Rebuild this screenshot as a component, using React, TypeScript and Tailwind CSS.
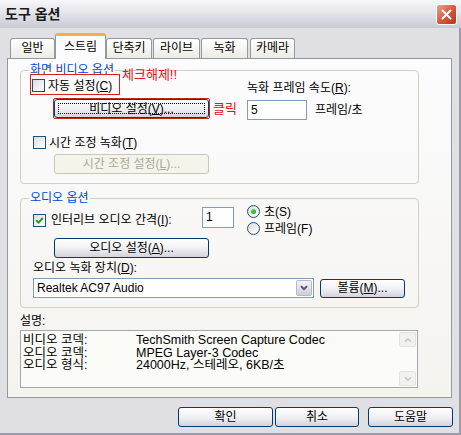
import React from "react";

const tabs = [
  { label: "일반", cls: "w-[45px]" },
  { label: "스트림", cls: "w-[51px]", active: true },
  { label: "단축키", cls: "w-[46px]" },
  { label: "라이브", cls: "w-[47px] ml-[1px]" },
  { label: "녹화", cls: "w-[47px] ml-[1px]" },
  { label: "카메라", cls: "w-[45px] ml-[2px]" },
];

const codecRows = [
  ["비디오 코덱:", "TechSmith Screen Capture Codec"],
  ["오디오 코덱:", "MPEG Layer-3 Codec"],
  ["오디오 형식:", "24000Hz, 스테레오, 6KB/초"],
];

function CheckBox({ checked = false }: { checked?: boolean }) {
  return (
    <span className="flex w-[13px] h-[13px] shrink-0 items-center justify-center border border-[#1C5180] bg-linear-to-br from-[#DCDCD7] to-white">
      {checked && (
        <svg width="9" height="9" viewBox="0 0 9 9">
          <path d="M1.2 4.2 L3.6 6.6 L7.8 2" fill="none" stroke="#21A121" strokeWidth="2" />
        </svg>
      )}
    </span>
  );
}

function Radio({ checked = false }: { checked?: boolean }) {
  return (
    <span className="flex w-[13px] h-[13px] shrink-0 items-center justify-center rounded-full border border-[#1C5180] bg-linear-to-br from-[#DCDCD7] to-white">
      {checked && (
        <span className="w-[5px] h-[5px] rounded-full bg-linear-to-br from-[#5ADA56] to-[#21A121]" />
      )}
    </span>
  );
}

function XpButton({
  children,
  className = "",
  disabled = false,
  focused = false,
}: {
  children: React.ReactNode;
  className?: string;
  disabled?: boolean;
  focused?: boolean;
}) {
  return (
    <div
      className={`flex items-center justify-center rounded-[3px] border text-[12px] leading-[14px] ${
        disabled
          ? "border-[#C9C7BA] bg-[#F5F4EA] text-[#ACA899]"
          : "border-[#003C74] bg-linear-to-b from-white via-[#F1F1F4] to-[#D3D3DD] text-black"
      } ${className}`}
    >
      {focused ? (
        <span className="flex h-[calc(100%-6px)] w-[calc(100%-6px)] items-center justify-center border border-dotted border-black">
          {children}
        </span>
      ) : (
        children
      )}
    </div>
  );
}

export default function App() {
  return (
    <div className="w-[461px] h-[435px] flex flex-col bg-[#E0DFE3] text-black font-['Liberation_Sans','Noto_Sans_CJK_KR',sans-serif] text-[12px] leading-[14px] overflow-hidden">
      {/* title bar */}
      <div className="h-[28px] shrink-0 flex items-center justify-between pl-[5px] pr-[4px] bg-linear-to-b from-[#F7F7F9] via-[#E2E2E8] to-[#C9C9D3]">
        <span className="text-[14px] font-bold leading-[16px] text-[#1A1A1A]">도구 옵션</span>
        <div className="w-[21px] h-[21px] mt-[1px] flex items-center justify-center rounded-[3px] border border-white bg-linear-to-br from-[#E9A391] via-[#D7583F] to-[#B8341F]">
          <svg width="11" height="11" viewBox="0 0 11 11">
            <path d="M1.5 1.5 L9.5 9.5 M9.5 1.5 L1.5 9.5" stroke="white" strokeWidth="2" strokeLinecap="round" />
          </svg>
        </div>
      </div>

      {/* body */}
      <div className="flex-1 flex flex-col pl-[7px] border-r-2 border-b-2 border-[#9A9AA8]">
        {/* tabs */}
        <div className="mt-[5px] h-[25px] flex items-end pl-[3px]">
          {tabs.map((t) =>
            t.active ? (
              <div
                key={t.label}
                className={`${t.cls} relative z-10 h-[26px] -mb-[1px] flex justify-center pt-[4px] rounded-t-[3px] border-x border-t-[3px] border-[#919B9C] border-t-[#F5B041] bg-[#FCFCFE] text-[12px]`}
              >
                {t.label}
              </div>
            ) : (
              <div
                key={t.label}
                className={`${t.cls} h-[20px] flex justify-center pt-[2px] rounded-t-[3px] border border-b-0 border-[#919B9C] bg-linear-to-b from-white to-[#ECEBE5]`}
              >
                {t.label}
              </div>
            )
          )}
        </div>

        {/* tab panel */}
        <div className="w-[445px] h-[340px] border border-[#919B9C] bg-linear-to-b from-[#FCFCFE] to-[#F4F3EE] pl-[12px] pt-[4px]">
          {/* video group */}
          <fieldset className="w-[399px] h-[121px] border border-[#D0D0BF] rounded-[4px] p-0">
            <legend className="ml-[8px] px-[1px] text-[#0046D5] leading-[14px]">화면 비디오 옵션</legend>
            <div className="flex">
              <div className="w-[226px] flex flex-col">
                <div className="relative -mt-[3px] ml-[9px] w-[90px] h-[21px] border border-[#D42020] flex items-center gap-[3px] pl-[1px] pt-[2px]">
                  <CheckBox />
                  <span>
                    자동 설정(<u>C</u>)
                  </span>
                  <span className="absolute left-[91px] -top-[7px] whitespace-nowrap text-[13px] leading-[14px] text-[#E8101A]">
                    체크해제!!
                  </span>
                </div>
                <div className="relative mt-[3px] ml-[32px] w-[157px] h-[21px] border border-[#C0281C] rounded-[2px]">
                  <XpButton focused className="w-full h-full">
                    비디오 설정(<u>V</u>)...
                  </XpButton>
                  <span className="absolute left-full top-[3px] ml-[4px] whitespace-nowrap text-[13px] leading-[14px] text-[#E8101A]">
                    클릭
                  </span>
                </div>
                <div className="mt-[16px] ml-[12px] h-[15px] flex items-center gap-[3px]">
                  <CheckBox />
                  <span>
                    시간 조정 녹화(<u>T</u>)
                  </span>
                </div>
                <XpButton disabled className="mt-[4px] ml-[33px] w-[155px] h-[20px]">
                  시간 조정 설정(<u>L</u>)...
                </XpButton>
              </div>
              <div className="flex flex-col">
                <span className="mt-[4px] whitespace-nowrap">
                  녹화 프레임 속도(<u>R</u>):
                </span>
                <div className="mt-[5px] flex items-center">
                  <div className="w-[60px] h-[20px] border border-[#7F9DB9] bg-white pl-[3px] flex items-center">5</div>
                  <span className="ml-[8px]">프레임/초</span>
                </div>
              </div>
            </div>
          </fieldset>

          {/* audio group */}
          <fieldset className="mt-[7px] w-[399px] h-[117px] border border-[#D0D0BF] rounded-[4px] p-0">
            <legend className="ml-[8px] px-[1px] text-[#0046D5] leading-[14px]">오디오 옵션</legend>
            <div className="h-[33px] flex items-start">
              <div className="ml-[12px] mt-[8px] w-[165px] h-[14px] flex items-center gap-[5px]">
                <CheckBox checked />
                <span className="whitespace-nowrap">
                  인터리브 오디오 간격(<u>I</u>):
                </span>
              </div>
              <div className="ml-[4px] mt-[2px] w-[32px] h-[21px] border border-[#7F9DB9] bg-white pl-[3px] pt-[2px]">1</div>
              <div className="ml-[13px] -mt-[2px] flex flex-col">
                <div className="h-[17px] flex items-center gap-[4px]">
                  <Radio checked />
                  <span>초(S)</span>
                </div>
                <div className="h-[17px] flex items-center gap-[4px]">
                  <Radio />
                  <span>프레임(F)</span>
                </div>
              </div>
            </div>
            <XpButton className="ml-[33px] w-[155px] h-[20px]">
              오디오 설정(<u>A</u>)...
            </XpButton>
            <div className="mt-[3px] ml-[12px]">
              오디오 녹화 장치(<u>D</u>):
            </div>
            <div className="mt-[3px] ml-[12px] flex items-center">
              <div className="w-[281px] h-[20px] border border-[#7F9DB9] bg-white flex items-center justify-between">
                <span className="pl-[3px]">Realtek AC97 Audio</span>
                <div className="w-[16px] h-[16px] mr-[1px] flex items-center justify-center rounded-[2px] border border-[#B4B8C8] bg-linear-to-b from-[#F2F2F6] to-[#CDCED9]">
                  <svg width="8" height="6" viewBox="0 0 8 6">
                    <path d="M1 1.2 L4 4.2 L7 1.2" fill="none" stroke="#4D4F5E" strokeWidth="1.8" />
                  </svg>
                </div>
              </div>
              <XpButton className="ml-[6px] w-[85px] h-[19px]">
                볼륨(<u>M</u>)...
              </XpButton>
            </div>
          </fieldset>

          {/* description */}
          <div className="mt-[6px]">설명:</div>
          <div className="mt-[2px] w-[398px] h-[58px] border border-[#A7A6AA] bg-[#FBFBF8] flex justify-between">
            <div className="pl-[2px] pt-[3px] flex flex-col gap-[0.5px] text-[12.5px]">
              {codecRows.map(([k, v]) => (
                <div key={k} className="h-[12px] flex items-center whitespace-nowrap leading-[12px]">
                  <span className="w-[113px]">{k}</span>
                  <span>{v}</span>
                </div>
              ))}
            </div>
            <div className="w-[17px] mr-[1px] flex flex-col justify-between py-[1px]">
              <div className="h-[15px] flex items-center justify-center rounded-[2px] border border-[#E3E3DB] bg-[#F1F1EE]">
                <svg width="8" height="6" viewBox="0 0 8 6">
                  <path d="M1 4.8 L4 1.8 L7 4.8" fill="none" stroke="#C4C4CC" strokeWidth="1.6" />
                </svg>
              </div>
              <div className="h-[15px] flex items-center justify-center rounded-[2px] border border-[#E3E3DB] bg-[#F1F1EE]">
                <svg width="8" height="6" viewBox="0 0 8 6">
                  <path d="M1 1.2 L4 4.2 L7 1.2" fill="none" stroke="#C4C4CC" strokeWidth="1.6" />
                </svg>
              </div>
            </div>
          </div>
        </div>

        {/* dialog buttons */}
        <div className="mt-[9px] flex">
          <XpButton className="ml-[171px] w-[95px] h-[20px]">확인</XpButton>
          <XpButton className="ml-[2px] w-[84px] h-[20px]">취소</XpButton>
          <XpButton className="ml-[9px] w-[85px] h-[20px]">도움말</XpButton>
        </div>
      </div>
    </div>
  );
}
